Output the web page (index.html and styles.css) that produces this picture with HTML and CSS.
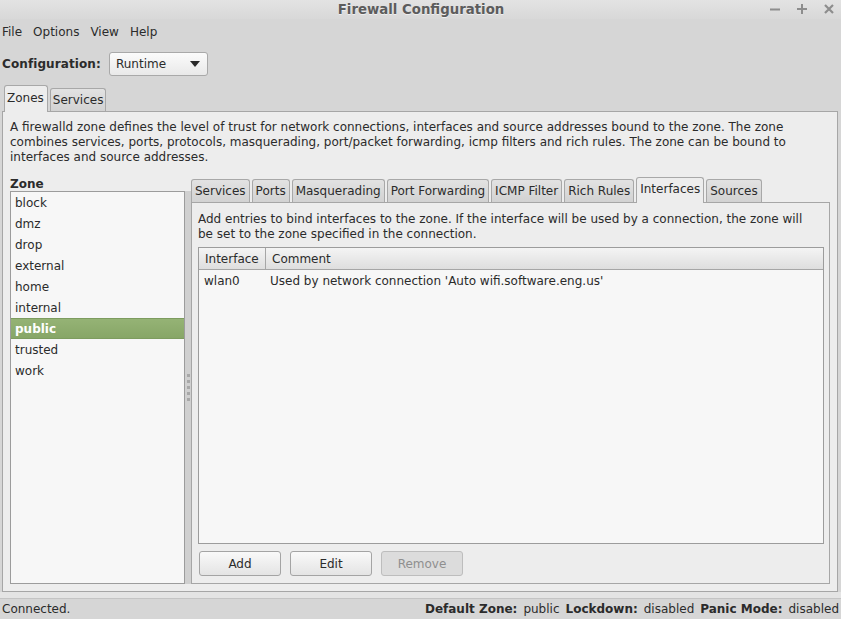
FILE: index.html
```html
<!DOCTYPE html>
<html>
<head>
<meta charset="utf-8">
<link rel="stylesheet" href="styles.css">
</head>
<body>
<div class="window">
  <div class="titlebar">
    <span class="title">Firewall Configuration</span>
    <div class="controls">
      <svg width="12" height="12" viewBox="0 0 12 12"><path d="M1 6.5h10" stroke="#8d8d8d" stroke-width="2"/></svg>
      <svg width="12" height="12" viewBox="0 0 12 12"><path d="M1 6h10M6 1v10" stroke="#8d8d8d" stroke-width="2"/></svg>
      <svg width="12" height="12" viewBox="0 0 12 12"><path d="M2 2l8 8M10 2l-8 8" stroke="#8d8d8d" stroke-width="2.2"/></svg>
    </div>
  </div>
  <div class="menubar">
    <span class="menu-item">File</span>
    <span class="menu-item">Options</span>
    <span class="menu-item">View</span>
    <span class="menu-item">Help</span>
  </div>
  <div class="config-row">
    <span class="config-label">Configuration:</span>
    <div class="combo">
      <span>Runtime</span>
      <svg width="10" height="6" viewBox="0 0 10 6"><path d="M0 0h10L5 6z" fill="#2a2a2a"/></svg>
    </div>
  </div>
  <div class="notebook">
    <div class="tabs outer-tabs">
      <div class="tab active">Zones</div>
      <div class="tab">Services</div>
    </div>
    <div class="pane outer-pane">
      <p class="desc">A firewalld zone defines the level of trust for network connections, interfaces and source addresses bound to the zone. The zone combines services, ports, protocols, masquerading, port/packet forwarding, icmp filters and rich rules. The zone can be bound to interfaces and source addresses.</p>
      <div class="paned">
        <div class="zone-col">
          <div class="zone-label">Zone</div>
          <div class="zone-list">
            <div class="zone">block</div>
            <div class="zone">dmz</div>
            <div class="zone">drop</div>
            <div class="zone">external</div>
            <div class="zone">home</div>
            <div class="zone">internal</div>
            <div class="zone selected">public</div>
            <div class="zone">trusted</div>
            <div class="zone">work</div>
          </div>
        </div>
        <div class="handle">
          <span class="dot"></span><span class="dot"></span><span class="dot"></span><span class="dot"></span><span class="dot"></span>
        </div>
        <div class="inner-notebook">
          <div class="tabs inner-tabs">
            <div class="tab">Services</div>
            <div class="tab">Ports</div>
            <div class="tab">Masquerading</div>
            <div class="tab">Port Forwarding</div>
            <div class="tab">ICMP Filter</div>
            <div class="tab">Rich Rules</div>
            <div class="tab active">Interfaces</div>
            <div class="tab">Sources</div>
          </div>
          <div class="pane inner-pane">
            <p class="hint">Add entries to bind interfaces to the zone. If the interface will be used by a connection, the zone will be set to the zone specified in the connection.</p>
            <div class="table">
              <div class="thead">
                <div class="th col-if">Interface</div>
                <div class="th col-comment">Comment</div>
              </div>
              <div class="trow">
                <div class="td col-if">wlan0</div>
                <div class="td col-comment">Used by network connection 'Auto wifi.software.eng.us'</div>
              </div>
            </div>
            <div class="buttons">
              <button class="btn">Add</button>
              <button class="btn">Edit</button>
              <button class="btn disabled">Remove</button>
            </div>
          </div>
        </div>
      </div>
    </div>
  </div>
  <div class="strip"></div>
  <div class="statusbar">
    <span>Connected.</span>
    <div class="status-right">
      <b>Default Zone:</b><span>public</span>
      <b>Lockdown:</b><span>disabled</span>
      <b>Panic Mode:</b><span>disabled</span>
    </div>
  </div>
</div>
</body>
</html>
```

FILE: styles.css
```css
* { box-sizing: border-box; }
html, body { margin: 0; padding: 0; }
body {
  font-family: "DejaVu Sans", sans-serif;
  font-size: 12px;
  color: #2b2b2b;
  background: #d6d6d6;
}
.window {
  width: 841px;
  height: 619px;
  display: flex;
  flex-direction: column;
  overflow: hidden;
}
.titlebar {
  height: 19px;
  flex: none;
  position: relative;
  background: linear-gradient(#e3e3e3, #d8d8d8);
  display: flex;
  align-items: center;
  justify-content: center;
}
.title {
  font-weight: bold;
  font-size: 13.3px;
  color: #5c5c5c;
  text-shadow: 0 1px 0 #efefef;
  margin-left: 1px;
}
.controls {
  position: absolute;
  right: 6px;
  top: 3px;
  display: flex;
  gap: 15px;
}
.menubar {
  height: 25px;
  flex: none;
  display: flex;
  align-items: center;
  padding-left: 2px;
  gap: 11px;
}
.config-row {
  flex: none;
  display: flex;
  align-items: center;
  padding: 8px 0 0 2px;
  height: 32px;
  gap: 8px;
}
.config-label { font-weight: bold; letter-spacing: 0.1px; }
.combo {
  width: 99px;
  height: 24px;
  border: 1px solid #a9a9a9;
  border-radius: 3px;
  background: linear-gradient(#fbfbfb, #e9e9e9);
  display: flex;
  align-items: center;
  justify-content: space-between;
  padding: 0 7px 0 6px;
}
.notebook {
  flex: none;
  margin-top: 9px;
  display: flex;
  flex-direction: column;
}
.tabs {
  display: flex;
  align-items: flex-end;
  gap: 2px;
}
.tab {
  height: 23px;
  border: 1px solid #a8a8a8;
  border-bottom: none;
  border-radius: 3px 3px 0 0;
  background: linear-gradient(#e2e2e2, #d2d2d2);
  padding: 0 3px;
  display: flex;
  align-items: center;
  white-space: nowrap;
}
.tab.active {
  background: #ededed;
  position: relative;
  z-index: 1;
  margin-bottom: -1px;
  height: 27px;
  padding-bottom: 2px;
}
.outer-tabs { height: 26px; padding-left: 4px; }
.outer-tabs .tab { padding: 0 2px; }
.outer-tabs .tab.active { padding: 0 3px 3px 2px; }
.pane {
  border: 1px solid #a6a6a6;
  background: #ededed;
}
.outer-pane {
  margin-left: 2px;
  width: 836px;
  height: 481px;
  padding: 8px 7px 7px 7px;
  display: flex;
  flex-direction: column;
}
.desc {
  margin: 0 0 10px 0;
  line-height: 15px;
  padding-right: 20px;
}
.paned {
  flex: 1;
  display: flex;
  min-height: 0;
}
.zone-col {
  width: 175px;
  display: flex;
  flex-direction: column;
}
.zone-label {
  font-weight: bold;
  height: 16px;
  line-height: 18px;
}
.zone-list {
  flex: 1;
  background: #f7f7f7;
  border: 1px solid #9c9c9c;
}
.zone {
  height: 21px;
  line-height: 20px;
  padding: 1px 0 0 4px;
}
.zone.selected {
  background: linear-gradient(#95b375, #87a667);
  border-top: 1px solid #7d9c5f;
  border-bottom: 1px solid #7d9c5f;
  line-height: 19px;
  padding-top: 1px;
  color: #fff;
  font-weight: bold;
}
.handle {
  width: 6px;
  background: #d0d0d0;
  margin-top: 16px;
  display: flex;
  flex-direction: column;
  align-items: center;
  justify-content: center;
  gap: 3px;
}
.dot {
  width: 3px;
  height: 3px;
  background: #a8a8a8;
}
.inner-notebook {
  flex: 1;
  display: flex;
  flex-direction: column;
}
.inner-tabs { height: 27px; }
.inner-tabs .tab.active { height: 26px; padding-bottom: 3px; }
.inner-pane {
  flex: 1;
  padding: 9px 5px 7px 6px;
  display: flex;
  flex-direction: column;
}
.hint {
  margin: 0 0 5px 0;
  line-height: 15px;
  padding-right: 16px;
}
.table {
  flex: 1;
  background: #f7f7f7;
  border: 1px solid #9c9c9c;
}
.thead {
  display: flex;
  height: 22px;
  border-bottom: 1px solid #a6a6a6;
  background: linear-gradient(#f4f4f4, #dedede);
}
.th {
  display: flex;
  align-items: center;
  padding-left: 6px;
}
.th.col-if { width: 67px; border-right: 1px solid #a6a6a6; }
.th.col-comment { padding-left: 6px; }
.trow {
  display: flex;
  height: 22px;
  align-items: center;
}
.td.col-if { width: 67px; padding-left: 5px; }
.td.col-comment { padding-left: 4px; }
.buttons {
  display: flex;
  gap: 9px;
  margin-top: 7px;
  padding-left: 1px;
}
.btn {
  width: 82px;
  height: 25px;
  font-family: "DejaVu Sans", sans-serif;
  font-size: 12px;
  color: #2b2b2b;
  border: 1px solid #a4a4a4;
  border-radius: 3px;
  background: linear-gradient(#f9f9f9, #e4e4e4);
  padding: 0;
}
.btn.disabled {
  color: #8f8f8f;
  background: #dcdcdc;
  border-color: #bdbdbd;
}
.strip {
  height: 7px;
  flex: none;
  background: #e4e4e4;
  border-bottom: 1px solid #c4c4c4;
}
.statusbar {
  flex: 1;
  display: flex;
  align-items: center;
  justify-content: space-between;
  padding: 0 2px;
  background: #d6d6d6;
}
.status-right {
  display: flex;
  gap: 6px;
}
.status-right b { font-weight: bold; }
```
